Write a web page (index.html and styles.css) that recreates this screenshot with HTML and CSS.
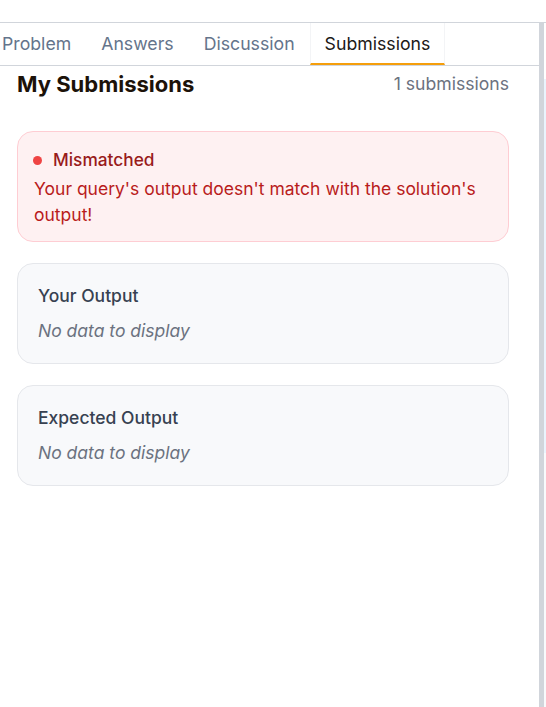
FILE: index.html
```html
<!DOCTYPE html>
<html>
<head>
<meta charset="utf-8">
<link rel="stylesheet" href="styles.css">
</head>
<body>
<div class="app">
  <div class="topbar"></div>
  <div class="workspace">
    <div class="panel">
      <nav class="tabs">
        <div class="tab">Problem</div>
        <div class="tab">Answers</div>
        <div class="tab">Discussion</div>
        <div class="tab active">Submissions</div>
      </nav>
      <div class="content">
        <div class="head">
          <h2 class="title">My Submissions</h2>
          <span class="count">1 submissions</span>
        </div>
        <div class="card error">
          <div class="status"><span class="dot"></span>Mismatched</div>
          <p class="msg">Your query's output doesn't match with the solution's output!</p>
        </div>
        <div class="card output">
          <div class="card-title">Your Output</div>
          <div class="empty">No data to display</div>
        </div>
        <div class="card output">
          <div class="card-title">Expected Output</div>
          <div class="empty">No data to display</div>
        </div>
      </div>
    </div>
    <div class="resizer"></div>
    <div class="side"></div>
  </div>
</div>
</body>
</html>
```
FILE: styles.css
```css
* { box-sizing: border-box; }
html, body { margin: 0; padding: 0; background: #fff; }
body {
  font-family: Inter, "Noto Sans", sans-serif;
  color: #111827;
  width: 546px;
  height: 707px;
  overflow: hidden;
}
.app { display: flex; flex-direction: column; height: 707px; }
.topbar { height: 23px; border-bottom: 1px solid #d1d5db; flex: none; }
.workspace { display: flex; flex: 1; min-height: 0; }
.panel { width: 539px; flex: none; display: flex; flex-direction: column; overflow: hidden; }
.resizer { width: 5px; background: #d1d5db; flex: none; }
.side { flex: 1; background: linear-gradient(#fff 0, #fff 56px, #eaf4fd 56px, #eaf4fd 430px, #f8fafc 430px); }

.tabs {
  display: flex;
  height: 43px;
  border-bottom: 1px solid #d1d5db;
  margin-left: -13px;
}
.tab {
  padding: 1px 15px 0;
  font-size: 17.7px;
  line-height: 39px;
  color: #64748b;
  white-space: nowrap;
  border-bottom: 2px solid transparent;
}
.tab.active {
  color: #1c1917;
  border-bottom-color: #f59e0b;
  border-left: 1px solid #f3f4f6;
  border-right: 1px solid #f3f4f6;
  padding: 1px 14px 0;
}

.content { padding: 4px 30px 0 17px; }
.head { display: flex; justify-content: space-between; align-items: center; height: 28px; margin-bottom: 33px; }
.title { margin: 0; font-size: 22px; font-weight: 700; color: #1c1209; line-height: 26px; }
.count { font-size: 17.6px; color: #6b7280; line-height: 26px; }

.card { border-radius: 16px; border: 1px solid; margin-bottom: 21px; }
.error { background: #fef1f2; border-color: #fecdd3; padding: 16px 16px 13px; }
.status { display: flex; align-items: center; font-size: 17.3px; font-weight: 500; line-height: 24px; color: #991b1b; }
.dot { width: 9px; height: 9px; border-radius: 50%; background: #ef4444; margin-right: 11px; margin-left: -1px; }
.msg { margin: 4px 0 0; font-size: 17.5px; line-height: 26px; color: #b91c1c; }

.output { background: #f8f9fb; border-color: #e5e7eb; padding: 20px; }
.card-title { font-size: 17.5px; font-weight: 500; line-height: 24px; color: #374151; margin-bottom: 11px; }
.empty { font-size: 17.5px; line-height: 24px; font-style: italic; color: #6b7280; }
```
